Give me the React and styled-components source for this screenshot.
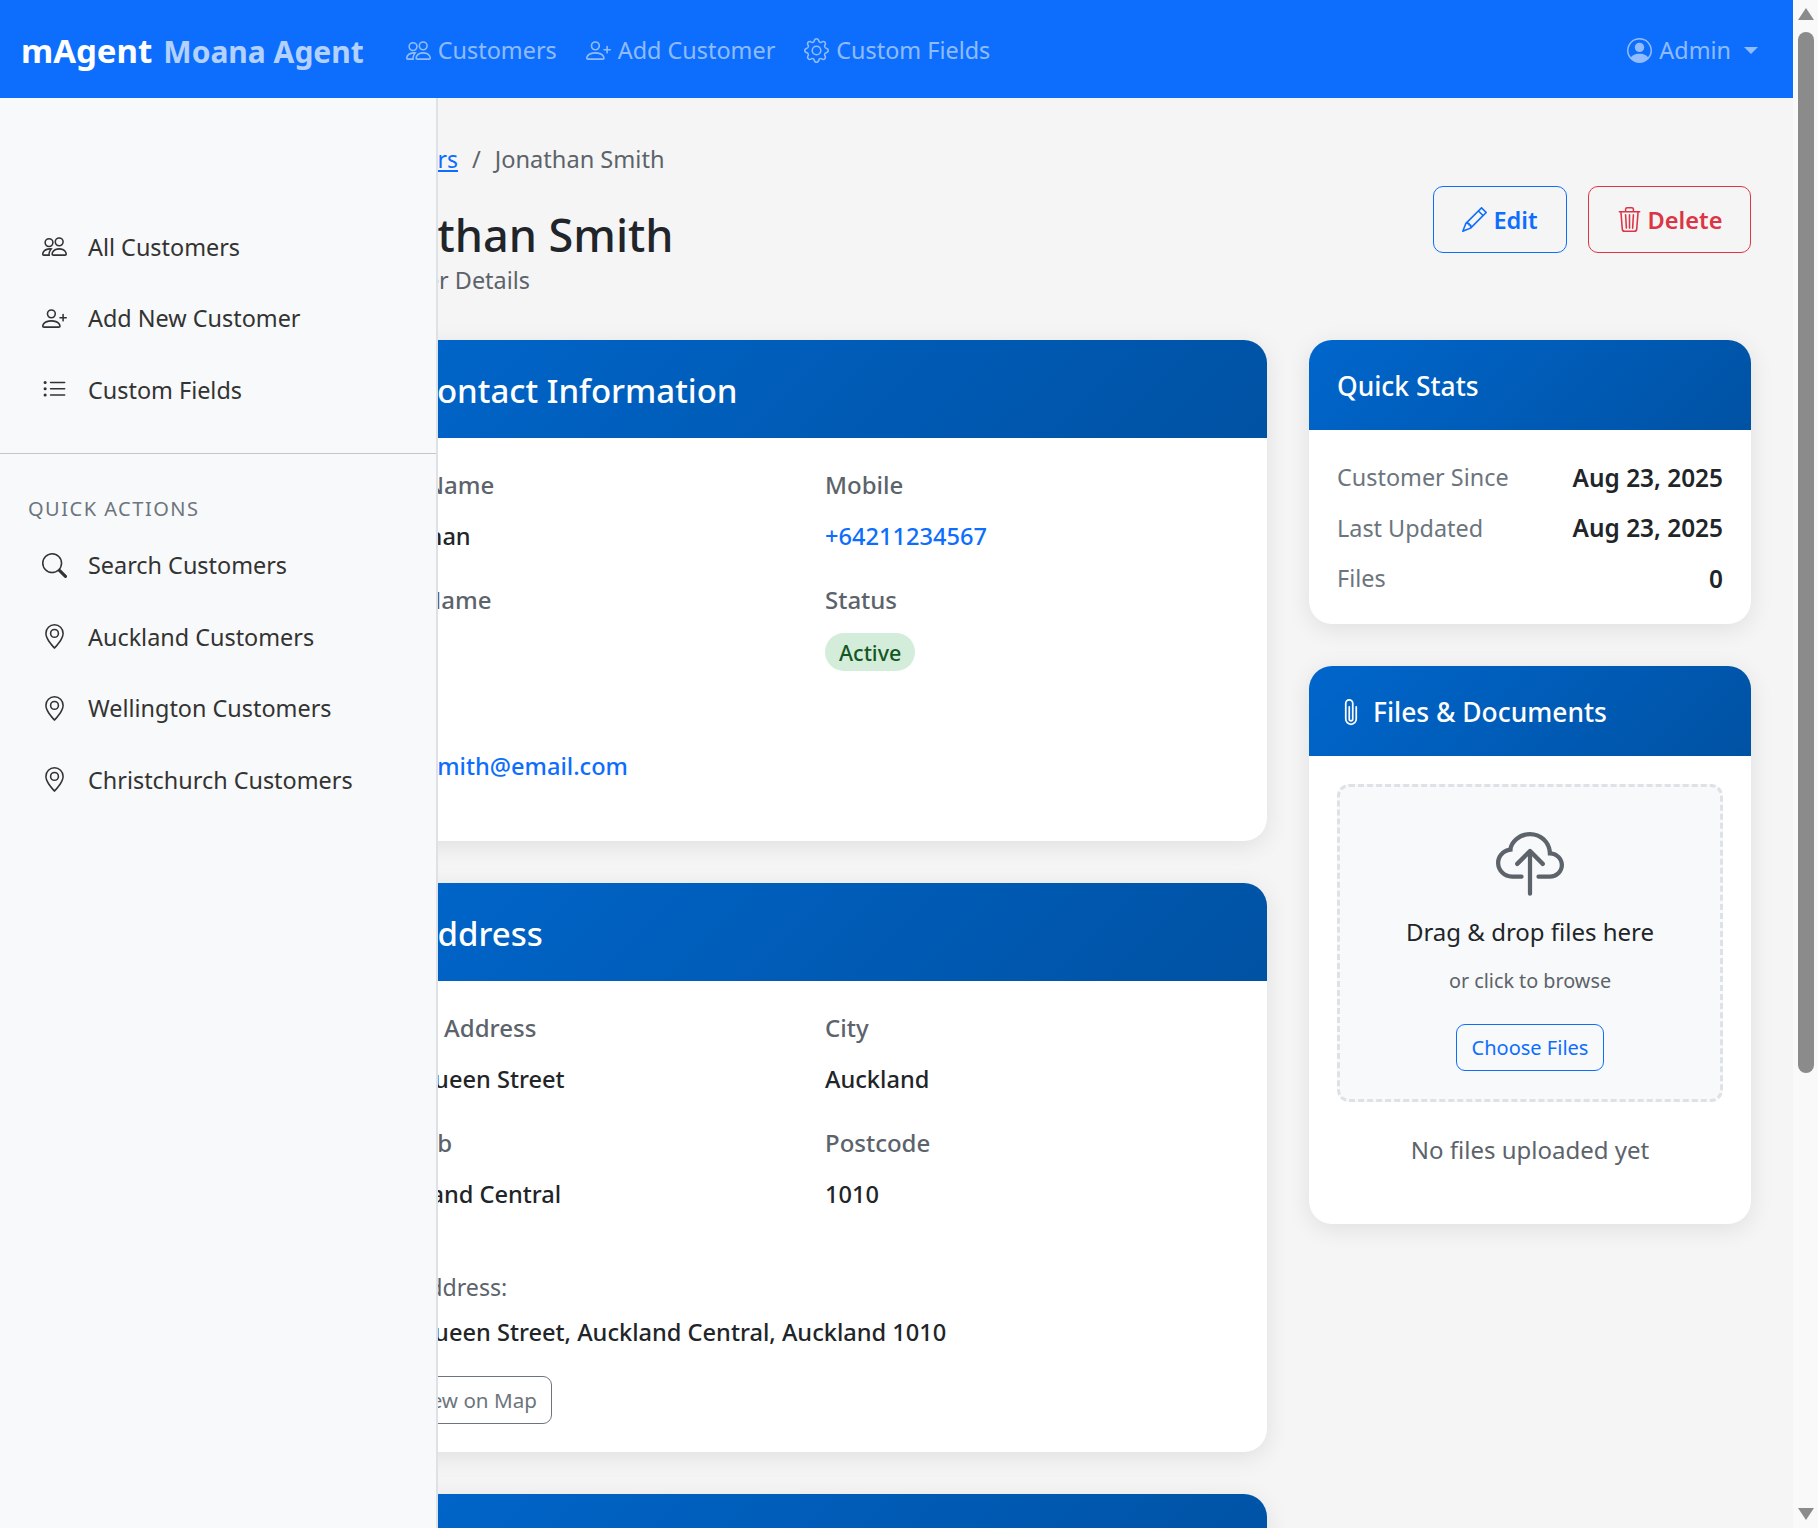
import React from 'react';
import styled, { createGlobalStyle } from 'styled-components';
import {
  BsPeople, BsPersonPlus, BsGear, BsPersonCircle, BsPencil, BsTrash3, BsListUl, BsSearch,
  BsGeoAlt, BsPaperclip, BsCloudUpload, BsPersonVcard, BsGeoAltFill, BsPinMap,
} from 'react-icons/bs';

const Global = createGlobalStyle`
  html, body { margin: 0; height: 100%; overflow: hidden; }
  body { font-family: "Noto Sans", "Open Sans", sans-serif; font-size: 24px; color: #212529; background: #f5f5f5; }
  * { box-sizing: border-box; }
`;

const Shell = styled.div`display: flex; height: 1528px; overflow: hidden;`;
const Page = styled.div`position: relative; flex: 1; min-width: 0; overflow: hidden;`;

const ScrollTrack = styled.div`
  width: 25px; flex: none; background: #f9f9f9; padding: 8px 4px;
  display: flex; flex-direction: column; align-items: center;
`;
const Arrow = styled.div`
  width: 0; height: 0; border-left: 8px solid transparent; border-right: 8px solid transparent;
  ${p => p.$down ? 'border-top: 12px solid #8b8b8b;' : 'border-bottom: 12px solid #8b8b8b;'}
  ${p => p.$down ? 'margin-top: auto;' : ''}
`;
const Thumb = styled.div`width: 16px; height: 1041px; margin-top: 12px; border-radius: 8px; background: #8b8b8b;`;

const Navbar = styled.nav`
  height: 98px; background: #0d6efd; display: flex; align-items: center; padding: 2px 35px 0 21px;
`;
const Brand = styled.div`font-size: 33px; font-weight: 700; color: #fff; white-space: nowrap; margin-right: 42px;`;
const BrandSub = styled.span`font-size: 30px; color: rgba(255,255,255,.7); margin-left: 11px;`;
const NavLinks = styled.div`display: flex; gap: 29px;`;
const NavLink = styled.a`
  display: flex; align-items: center; gap: 7px; color: rgba(255,255,255,.55); font-size: 23.4px; white-space: nowrap;
  svg { width: 25px; height: 25px; }
`;
const AdminMenu = styled(NavLink)`margin-left: auto;`;
const Caret = styled.span`
  width: 0; height: 0; margin-left: 6px; border-left: 7px solid transparent; border-right: 7px solid transparent;
  border-top: 7px solid rgba(255,255,255,.55);
`;

const Sidebar = styled.aside`
  position: absolute; top: 98px; left: 0; bottom: 0; width: 438px; background: #f8f9fa;
  border-right: 2px solid #dee2e6; padding-top: 113px; z-index: 2;
`;
const SideItem = styled.a`
  display: flex; align-items: center; height: 71.5px; padding-left: 42px; gap: 21px; color: #333; font-size: 23.4px; white-space: nowrap;
  svg { width: 25px; height: 25px; flex: none; }
`;
const SideDivider = styled.hr`margin: 27px 0 0; border: 0; border-top: 1px solid #c4c6c8;`;
const SideHeading = styled.div`
  margin: 40px 0 6px 28px; font-size: 20px; letter-spacing: 1.5px; color: #6c757d; line-height: 30px;
`;

const Main = styled.main`padding: 39px 42px 0 341px;`;
const Crumbs = styled.div`display: flex; gap: 14px; font-size: 23.6px; line-height: 44px; color: #5c636a;`;
const CrumbLink = styled.a`color: #0d6efd; text-decoration: underline; font-size: 23px;`;

const TitleRow = styled.div`display: flex; justify-content: space-between; align-items: flex-start; margin-top: 5px;`;
const Title = styled.h1`margin: 19px 0 0 2px; font-size: 45px; font-weight: 500; line-height: 60px;`;
const Sub = styled.div`font-size: 23.4px; color: #5c636a; line-height: 36px; margin-top: -3px;`;
const Actions = styled.div`display: flex; gap: 21px;`;
const ActionBtn = styled.a`
  display: flex; align-items: center; justify-content: center; gap: 6px; height: 67px; width: ${p => p.$w}px;
  background: transparent; border: 1.5px solid ${p => p.$c}; border-radius: 10px; color: ${p => p.$c};
  font-size: 23.6px; font-weight: 600;
  svg { width: 25px; height: 25px; }
`;

const Columns = styled.div`display: grid; grid-template-columns: 926px 442px; gap: 42px; margin-top: 42px;`;
const Stack = styled.div`display: flex; flex-direction: column; gap: 42px;`;
const Card = styled.section`
  background: #fff; border-radius: 23px; box-shadow: 0 5px 24px rgba(0,0,0,.09); overflow: hidden;
  height: ${p => p.$h}px; flex: none;
`;
const CardHead = styled.header`
  display: flex; align-items: center; gap: ${p => p.$gap}px; height: ${p => p.$h}px; padding: 2px 28px 0; color: #fff;
  background: linear-gradient(135deg, #0066cc, #0052a3); font-size: ${p => p.$fs}px; font-weight: 500;
  svg { width: ${p => p.$ic}px; height: ${p => p.$ic}px; flex: none; }
`;
const CardBody = styled.div`padding: ${p => p.$pt || 28}px 28px 28px;`;
const FieldGrid = styled.div`display: grid; grid-template-columns: 456px 1fr;`;
const Field = styled.div`height: 115px;`;
const Label = styled.div`font-size: 24px; font-weight: 500; color: #5c636a; line-height: 36px;`;
const Value = styled.div`font-size: 23.6px; font-weight: 500; line-height: 36px; margin-top: 15px; color: ${p => p.$link ? '#0d6efd' : '#212529'};`;
const Pill = styled.span`
  display: inline-flex; align-items: center; height: 38px; padding: 0 14px; margin-top: 15px; border-radius: 19px;
  background: #d4edda; color: #155724; font-size: 21.5px; font-weight: 500;
`;
const FullLabel = styled.div`font-size: 23.2px; color: #5c636a; line-height: 36px; margin-top: 29px;`;
const FullValue = styled.div`font-size: 23.6px; font-weight: 500; line-height: 36px; margin-top: 9px;`;
const MapBtn = styled.a`
  display: inline-flex; align-items: center; gap: 8px; height: 48px; padding: 0 14px; margin-top: 26px; border: 1px solid #6c757d;
  border-radius: 9px; color: #6c757d; font-size: 20.6px;
  svg { width: 21px; height: 21px; }
`;

const StatRow = styled.div`display: flex; justify-content: space-between; align-items: center; height: 50.5px;`;
const StatLabel = styled.span`color: #6c757d; font-size: 23.4px;`;
const StatValue = styled.span`font-weight: 600; font-size: 24.4px;`;

const Drop = styled.div`
  height: 318px; border: 3px dashed #dee2e6; border-radius: 12px; background: #f8f9fa;
  display: flex; flex-direction: column; align-items: center; padding-top: 45px;
`;
const CloudIcon = styled(BsCloudUpload)`width: 68px; height: 68px; color: #5c636a; flex: none;`;
const DropTitle = styled.div`font-size: 24px; line-height: 36px; margin-top: 14px;`;
const DropSub = styled.div`font-size: 19.8px; line-height: 30px; color: #5c636a; margin-top: 16px;`;
const ChooseBtn = styled.a`
  display: flex; align-items: center; justify-content: center; width: 148px; height: 47px; margin-top: 28px;
  border: 1px solid #0d6efd; border-radius: 9px; color: #0d6efd; font-size: 20px;
`;
const Empty = styled.div`text-align: center; color: #5c636a; font-size: 24px; line-height: 36px; margin-top: 30px;`;

export default function App() {
  return (
    <Shell>
      <Global />
      <Page>
        <Navbar>
          <Brand>mAgent<BrandSub>Moana Agent</BrandSub></Brand>
          <NavLinks>
            <NavLink><BsPeople />Customers</NavLink>
            <NavLink><BsPersonPlus />Add Customer</NavLink>
            <NavLink><BsGear />Custom Fields</NavLink>
          </NavLinks>
          <AdminMenu><BsPersonCircle />Admin<Caret /></AdminMenu>
        </Navbar>
        <Sidebar>
          <SideItem><BsPeople />All Customers</SideItem>
          <SideItem><BsPersonPlus />Add New Customer</SideItem>
          <SideItem><BsListUl />Custom Fields</SideItem>
          <SideDivider />
          <SideHeading>QUICK ACTIONS</SideHeading>
          <SideItem><BsSearch />Search Customers</SideItem>
          <SideItem><BsGeoAlt />Auckland Customers</SideItem>
          <SideItem><BsGeoAlt />Wellington Customers</SideItem>
          <SideItem><BsGeoAlt />Christchurch Customers</SideItem>
        </Sidebar>
        <Main>
          <Crumbs><CrumbLink>Customers</CrumbLink><span>/</span><span>Jonathan Smith</span></Crumbs>
          <TitleRow>
            <div>
              <Title>Jonathan Smith</Title>
              <Sub>Customer Details</Sub>
            </div>
            <Actions>
              <ActionBtn $c="#0d6efd" $w={134}><BsPencil />Edit</ActionBtn>
              <ActionBtn $c="#dc3545" $w={163}><BsTrash3 />Delete</ActionBtn>
            </Actions>
          </TitleRow>
          <Columns>
            <Stack>
              <Card $h={501}>
                <CardHead $h={98} $fs={33} $ic={33} $gap={14}><BsPersonVcard />Contact Information</CardHead>
                <CardBody $pt={29}>
                  <FieldGrid>
                    <Field><Label>First Name</Label><Value>Jonathan</Value></Field>
                    <Field><Label>Mobile</Label><Value $link>+64211234567</Value></Field>
                    <Field><Label>Last Name</Label><Value>Smith</Value></Field>
                    <Field><Label>Status</Label><Pill>Active</Pill></Field>
                    <Field><Label>Email</Label><Value $link>john.smith@email.com</Value></Field>
                  </FieldGrid>
                </CardBody>
              </Card>
              <Card $h={569}>
                <CardHead $h={98} $fs={33} $ic={33} $gap={14}><BsGeoAltFill />Address</CardHead>
                <CardBody $pt={29}>
                  <FieldGrid>
                    <Field><Label>Street Address</Label><Value>123 Queen Street</Value></Field>
                    <Field><Label>City</Label><Value>Auckland</Value></Field>
                    <Field><Label>Suburb</Label><Value>Auckland Central</Value></Field>
                    <Field><Label>Postcode</Label><Value>1010</Value></Field>
                  </FieldGrid>
                  <FullLabel>Full Address:</FullLabel>
                  <FullValue>123 Queen Street, Auckland Central, Auckland 1010</FullValue>
                  <MapBtn><BsPinMap />View on Map</MapBtn>
                </CardBody>
              </Card>
              <Card $h={200}><CardHead $h={98} $fs={33} $ic={33} $gap={14} /></Card>
            </Stack>
            <Stack>
              <Card $h={284}>
                <CardHead $h={90} $fs={26.4} $ic={28} $gap={8}>Quick Stats</CardHead>
                <CardBody $pt={22}>
                  <StatRow><StatLabel>Customer Since</StatLabel><StatValue>Aug 23, 2025</StatValue></StatRow>
                  <StatRow><StatLabel>Last Updated</StatLabel><StatValue>Aug 23, 2025</StatValue></StatRow>
                  <StatRow><StatLabel>Files</StatLabel><StatValue>0</StatValue></StatRow>
                </CardBody>
              </Card>
              <Card $h={558}>
                <CardHead $h={90} $fs={26.4} $ic={28} $gap={8}><BsPaperclip />Files &amp; Documents</CardHead>
                <CardBody>
                  <Drop>
                    <CloudIcon />
                    <DropTitle>Drag &amp; drop files here</DropTitle>
                    <DropSub>or click to browse</DropSub>
                    <ChooseBtn>Choose Files</ChooseBtn>
                  </Drop>
                  <Empty>No files uploaded yet</Empty>
                </CardBody>
              </Card>
            </Stack>
          </Columns>
        </Main>
      </Page>
      <ScrollTrack>
        <Arrow />
        <Thumb />
        <Arrow $down />
      </ScrollTrack>
    </Shell>
  );
}
